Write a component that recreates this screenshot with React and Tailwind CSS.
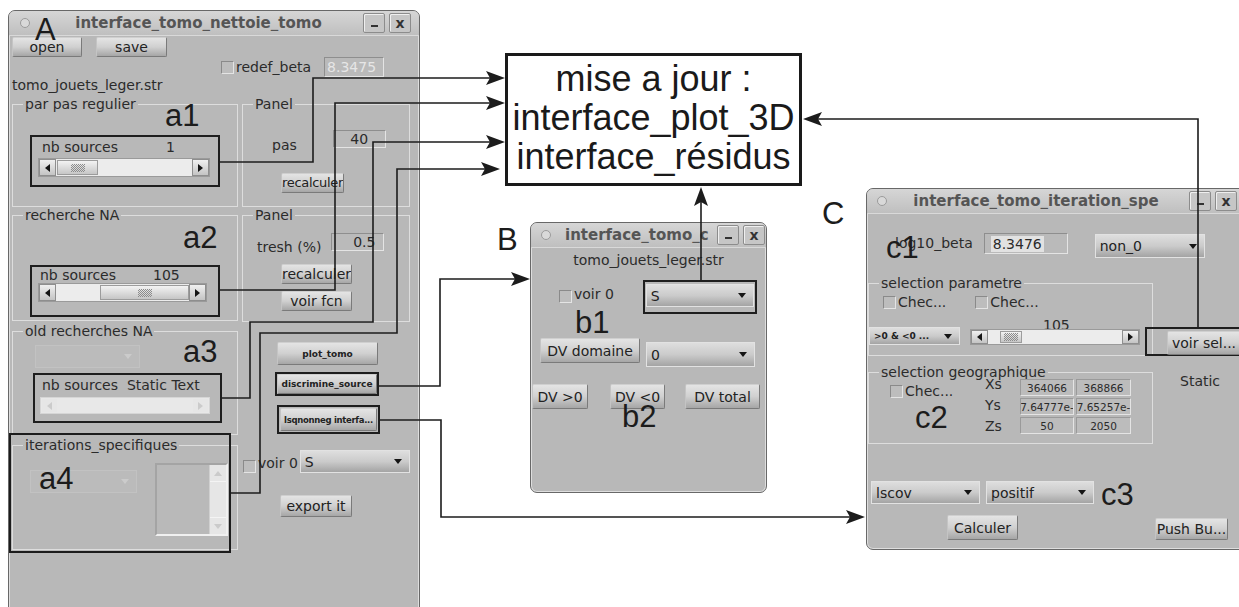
const ui = "font-['DejaVu_Sans',sans-serif]";
const ann = "font-['Liberation_Sans',Arial,sans-serif]";

function Tri({ dir = 'down', faint = false }) {
  const cls = {
    down: 'border-x-[4px] border-t-[5px] border-x-transparent border-t-[#151515]',
    left: 'border-y-[4px] border-r-[5px] border-y-transparent border-r-[#151515]',
    right: 'border-y-[4px] border-l-[5px] border-y-transparent border-l-[#151515]',
    up: 'border-x-[4px] border-b-[5px] border-x-transparent border-b-[#151515]',
  };
  const faintCls = {
    down: 'border-x-[4px] border-t-[5px] border-x-transparent border-t-[#cbcbcb]',
    left: 'border-y-[4px] border-r-[5px] border-y-transparent border-r-[#cbcbcb]',
    right: 'border-y-[4px] border-l-[5px] border-y-transparent border-l-[#cbcbcb]',
    up: 'border-x-[4px] border-b-[5px] border-x-transparent border-b-[#cbcbcb]',
  };
  return <span className={`h-0 w-0 ${faint ? faintCls[dir] : cls[dir]}`} />;
}

function WinBtn({ children }) {
  return (
    <div className="flex h-[20px] w-[22px] items-center justify-center rounded-[2px] border border-[#8c8c8c] bg-[#c6c6c6] text-[14px] font-bold leading-none text-[#333] shadow-[inset_1px_1px_0_#efefef]">
      {children}
    </div>
  );
}

function Win({ title, className = '', titleCls = '', barCls = '', children }) {
  return (
    <div
      className={`absolute flex flex-col overflow-hidden rounded-[7px] border border-[#686868] bg-[#b8b8b8] text-[14px] leading-[16px] text-[#2b2b2b] shadow-[inset_1px_0_0_#dedede,inset_-1px_0_0_#dedede,inset_0_-1px_0_#dedede] ${ui} ${className}`}
    >
      <div className={`flex h-[25px] shrink-0 items-center border-b border-[#d9d9d9] bg-linear-to-b from-[#d6d6d6] to-[#bfbfbf] ${barCls}`}>
        <span className="h-[10px] w-[10px] shrink-0 rounded-full border border-[#9b9b9b] bg-[#d9d9d9]" />
        <span className={`overflow-hidden whitespace-nowrap text-[15px] font-bold text-[#555] ${titleCls}`}>{title}</span>
        <div className="ml-[4px] flex shrink-0 gap-[4px]">
          <WinBtn>
            <span className="mt-[6px] h-[2px] w-[7px] bg-[#333]" />
          </WinBtn>
          <WinBtn>x</WinBtn>
        </div>
      </div>
      {children}
    </div>
  );
}

function Btn({ className = '', children }) {
  return (
    <div
      className={`flex shrink-0 items-center justify-center overflow-hidden whitespace-nowrap rounded-[2px] border border-[#7a7a7a] border-l-[#c4c4c4] border-t-[#cfcfcf] bg-linear-to-b from-[#e4e4e4] via-[#d0d0d0] to-[#a6a6a6] text-[#222] ${className}`}
    >
      {children}
    </div>
  );
}

function Drop({ className = '', children, faint = false }) {
  return (
    <div
      className={`flex shrink-0 items-center justify-between overflow-hidden whitespace-nowrap border pl-[4px] pr-[7px] ${
        faint
          ? 'border-[#c2c2c2] bg-[#bbbbbb] text-transparent'
          : 'border-[#e2e2e2] bg-linear-to-b from-[#dedede] via-[#cbcbcb] to-[#a4a4a4] text-[#222]'
      } ${className}`}
    >
      <span>{children}</span>
      <Tri dir="down" faint={faint} />
    </div>
  );
}

function Input({ className = '', children }) {
  return (
    <div
      className={`flex shrink-0 items-center justify-center border border-[#e4e4e4] border-l-[#8e8e8e] border-t-[#8e8e8e] bg-[#bababa] ${className}`}
    >
      {children}
    </div>
  );
}

function Check({ className = '' }) {
  return (
    <span
      className={`block h-[13px] w-[13px] shrink-0 border border-[#e4e4e4] border-l-[#8a8a8a] border-t-[#8a8a8a] bg-[#bdbdbd] ${className}`}
    />
  );
}

function ArrowBtn({ dir, faint }) {
  return (
    <div
      className={`flex w-[17px] shrink-0 items-center justify-center border ${
        faint ? 'border-[#e8e8e8] bg-[#e6e6e6]' : 'border-[#8e8e8e] bg-linear-to-b from-[#f0f0f0] to-[#c4c4c4]'
      }`}
    >
      <Tri dir={dir} faint={faint} />
    </div>
  );
}

function Scroll({ className = '', gapCls = '', thumbCls = '', faint = false }) {
  return (
    <div className={`flex shrink-0 border ${faint ? 'border-[#d6d6d6] bg-[#e8e8e8]' : 'border-[#9a9a9a] bg-[#ececec]'} ${className}`}>
      <ArrowBtn dir="left" faint={faint} />
      <div className="flex flex-1 items-stretch py-[1px]">
        {!faint && (
          <>
            <div className={gapCls} />
            <div
              className={`flex items-center justify-center border border-[#9c9c9c] bg-linear-to-b from-[#f3f3f3] to-[#c6c6c6] ${thumbCls}`}
            >
              <span className="h-[8px] w-[14px] bg-[image:repeating-conic-gradient(#8c8c8c_0_25%,transparent_0_50%)] bg-[length:2px_2px]" />
            </div>
          </>
        )}
      </div>
      <ArrowBtn dir="right" faint={faint} />
    </div>
  );
}

function Group({ label, className = '', children }) {
  return (
    <fieldset className={`min-w-0 shrink-0 border border-[#dddddd] ${className}`}>
      <legend className="ml-[10px] px-[2px] text-[14px] leading-[16px] text-[#2b2b2b]">{label}</legend>
      {children}
    </fieldset>
  );
}

function Mark({ className = '', children }) {
  return (
    <span className={`absolute text-[31px] leading-[31px] text-[#1c1c1c] ${ann} ${className}`}>{children}</span>
  );
}

function Frame({ className = '', children }) {
  return <div className={`shrink-0 border-2 border-[#1e1e1e] ${className}`}>{children}</div>;
}

function WindowA() {
  return (
    <Win
      title="interface_tomo_nettoie_tomo"
      className="left-[8px] top-[10px] h-[610px] w-[412px]"
      barCls="pl-[11px] pr-[8px]"
      titleCls="flex-1 pl-[8px] text-center"
    >
      <div className="flex flex-col pl-[3px]">
        <div className="mt-[1px] flex gap-[14px]">
          <Btn className="h-[20px] w-[70px] text-[14px]">open</Btn>
          <Btn className="h-[20px] w-[71px] text-[14px]">save</Btn>
        </div>
        <div className="flex h-[20px] items-center">
          <Check className="ml-[209px]" />
          <span className="ml-[2px]">redef_beta</span>
          <Input className="ml-[13px] h-[20px] w-[60px] justify-start pl-[2px] text-[#e6e6e6]">8.3475</Input>
        </div>
        <div className="h-[16px]">tomo_jouets_leger.str</div>

        <div className="mt-[3px] grid grid-cols-[226px_168px] gap-x-[4px]">
          {/* left column */}
          <div className="flex flex-col">
            <Group label="par pas regulier" className="h-[111px]">
              <Frame className="ml-[17px] mt-[23px] h-[52px] w-[190px]">
                <div className="flex pl-[10px] pt-[2px]">
                  <span className="w-[124px]">nb sources</span>
                  <span>1</span>
                </div>
                <Scroll className="ml-[6px] mt-[3px] h-[19px] w-[172px]" gapCls="w-[1px]" thumbCls="w-[41px]" />
              </Frame>
            </Group>
            <Group label="recherche NA" className="h-[114px]">
              <Frame className="ml-[17px] mt-[42px] h-[52px] w-[190px]">
                <div className="flex pl-[8px]">
                  <span className="w-[113px]">nb sources</span>
                  <span>105</span>
                </div>
                <Scroll className="ml-[6px] h-[19px] w-[169px]" gapCls="w-[44px]" thumbCls="w-[89px]" />
              </Frame>
            </Group>
            <Group label="old recherches NA" className="mt-[2px] h-[112px]">
              <Drop faint className="ml-[22px] mt-[6px] h-[23px] w-[105px]">x</Drop>
              <Frame className="ml-[20px] mt-[5px] h-[50px] w-[189px]">
                <div className="whitespace-pre pl-[7px] pt-[2px]">nb sources  Static Text</div>
                <Scroll faint className="ml-[5px] mt-[4px] h-[17px] w-[170px]" />
              </Frame>
            </Group>
            <Group label="iterations_specifiques" className="mt-[2px] h-[113px]">
              <div className="flex items-start">
                <Drop faint className="ml-[17px] mt-[17px] h-[23px] w-[107px]">x</Drop>
                <div className="ml-[18px] mt-[10px] flex h-[73px] w-[73px] border-2 border-[#f0f0f0] border-l-[#a4a4a4] border-t-[#a4a4a4] bg-[#b9b9b9]">
                  <div className="flex-1" />
                  <div className="flex w-[17px] flex-col border-l border-[#d0d0d0] bg-[#e6e6e6]">
                    <div className="flex h-[17px] items-center justify-center border-b border-[#f4f4f4]">
                      <Tri dir="up" faint />
                    </div>
                    <div className="flex-1" />
                    <div className="flex h-[17px] items-center justify-center border-t border-[#f4f4f4]">
                      <Tri dir="down" faint />
                    </div>
                  </div>
                </div>
              </div>
            </Group>
          </div>

          {/* right column */}
          <div className="flex flex-col">
            <Group label="Panel" className="h-[111px]">
              <div className="mt-[18px] flex items-start">
                <span className="ml-[29px] mt-[7px]">pas</span>
                <Input className="ml-[36px] h-[18px] w-[53px]">40</Input>
              </div>
              <Btn className="ml-[38px] mt-[20px] h-[20px] w-[63px] text-[13px] tracking-[-0.3px]">recalculer</Btn>
            </Group>
            <Group label="Panel" className="h-[115px]">
              <div className="mt-[10px] flex items-start">
                <span className="ml-[14px] mt-[6px]">tresh (%)</span>
                <Input className="ml-[10px] h-[18px] w-[53px] justify-end pr-[8px]">0.5</Input>
              </div>
              <Btn className="ml-[38px] mt-[9px] h-[20px] w-[71px] text-[14px]">recalculer</Btn>
              <Btn className="ml-[38px] mt-[7px] h-[20px] w-[71px] text-[14px]">voir fcn</Btn>
            </Group>
            <Btn className="ml-[35px] mt-[20px] h-[23px] w-[101px] text-[9px] font-bold">plot_tomo</Btn>
            <Frame className="ml-[33px] mt-[7px] h-[24px] w-[104px]">
              <Btn className="h-full w-full text-[9px] font-bold">discrimine_source</Btn>
            </Frame>
            <Frame className="ml-[35px] mt-[9px] h-[29px] w-[103px] p-[1px]">
              <Btn className="h-full w-full text-[8.5px] font-bold tracking-[-0.3px]">lsqnonneg interfa...</Btn>
            </Frame>
            <div className="mt-[16px] flex items-start">
              <Check className="ml-[1px] mt-[10px]" />
              <span className="ml-[2px] mt-[5px]">voir 0</span>
              <Drop className="ml-[2px] h-[23px] w-[110px]">S</Drop>
            </div>
            <Btn className="ml-[38px] mt-[22px] h-[22px] w-[72px] text-[14px]">export it</Btn>
          </div>
        </div>
      </div>
    </Win>
  );
}

function WindowB() {
  return (
    <Win
      title="interface_tomo_c"
      className="left-[530px] top-[222px] h-[271px] w-[237px]"
      barCls="pl-[10px] pr-[1px]"
      titleCls="ml-[14px] flex-1"
    >
      <div className="mt-[4px] text-center">tomo_jouets_leger.str</div>
      <div className="mt-[12px] flex items-start">
        <Check className="ml-[28px] mt-[10px]" />
        <span className="ml-[2px] mt-[6px]">voir 0</span>
        <Frame className="ml-[29px] h-[34px] w-[114px] pl-[1px] pt-[2px]">
          <Drop className="h-[23px] w-[108px]">S</Drop>
        </Frame>
      </div>
      <div className="mt-[24px] flex items-start">
        <Btn className="ml-[9px] h-[25px] w-[100px] text-[14px]">DV domaine</Btn>
        <Drop className="ml-[6px] mt-[4px] h-[25px] w-[109px]">0</Drop>
      </div>
      <div className="mt-[17px] flex">
        <Btn className="ml-[1px] h-[25px] w-[56px] text-[14px]">DV &gt;0</Btn>
        <Btn className="ml-[22px] h-[25px] w-[55px] text-[14px]">DV &lt;0</Btn>
        <Btn className="ml-[20px] h-[25px] w-[75px] text-[14px]">DV total</Btn>
      </div>
    </Win>
  );
}

function WindowC() {
  const vals = ['364066', '368866', '7.64777e-', '7.65257e-', '50', '2050'];
  return (
    <Win
      title="interface_tomo_iteration_spe"
      className="left-[866px] top-[188px] h-[362px] w-[380px]"
      barCls="pl-[10px] pr-[8px]"
      titleCls="flex-1 text-center"
    >
      <div className="mt-[19px] flex items-start">
        <span className="ml-[28px] mt-[2px]">log10_beta</span>
        <Input className="ml-[11px] h-[21px] w-[84px] justify-start pl-[6px]">
          <span className="bg-[#e2e2e2] px-[2px]">8.3476</span>
        </Input>
        <Drop className="ml-[27px] mt-[1px] h-[24px] w-[110px]">non_0</Drop>
      </div>

      <div className="mt-[17px] flex items-start">
        <Group label="selection parametre" className="ml-[1px] h-[81px] w-[285px]">
          <div className="mt-[3px] flex h-[16px] items-center">
            <Check className="ml-[14px]" />
            <span className="ml-[2px]">Chec...</span>
            <Check className="ml-[29px]" />
            <span className="ml-[2px]">Chec...</span>
          </div>
          <div className="ml-[174px] mt-[9px] leading-[12px]">105</div>
          <div className="-mt-[4px] flex items-start">
            <Drop className="h-[18px] w-[91px] text-[9px] font-bold">&gt;0 &amp; &lt;0 ...</Drop>
            <Scroll className="ml-[10px] mt-[2px] h-[16px] w-[170px]" gapCls="w-[12px]" thumbCls="w-[22px]" />
          </div>
        </Group>
        <Frame className="-ml-[8px] mt-[52px] h-[29px] w-[100px]">
          <Btn className="ml-[20px] mt-[2px] h-[24px] w-[74px] text-[14px]">voir sel...</Btn>
        </Frame>
      </div>

      <div className="mt-[8px] flex items-start">
        <Group label="selection geographique" className="ml-[1px] h-[80px] w-[285px]">
          <div className="flex items-start">
            <div className="mt-[3px] flex w-[116px] items-center pl-[21px]">
              <Check />
              <span className="ml-[2px]">Chec...</span>
            </div>
            <div className="-mt-[6px] flex w-[35px] flex-col leading-[21px]">
              <span>Xs</span>
              <span>Ys</span>
              <span>Zs</span>
            </div>
            <div className="-mt-[1px] grid auto-rows-[17px] grid-cols-[54px_55px] gap-[2px] text-[10.5px]">
              {vals.map((v) => (
                <div
                  key={v}
                  className="flex items-center justify-center overflow-hidden whitespace-nowrap border border-[#e4e4e4] border-l-[#9a9a9a] border-t-[#9a9a9a] bg-[#bcbcbc]"
                >
                  {v}
                </div>
              ))}
            </div>
          </div>
        </Group>
        <span className="ml-[27px] mt-[9px]">Static</span>
      </div>

      <div className="mt-[37px] flex">
        <Drop className="ml-[4px] h-[23px] w-[109px]">lscov</Drop>
        <Drop className="ml-[6px] h-[23px] w-[108px]">positif</Drop>
      </div>
      <div className="mt-[11px] flex items-start">
        <Btn className="ml-[80px] h-[25px] w-[71px] text-[14px]">Calculer</Btn>
        <Btn className="ml-[137px] mt-[3px] h-[22px] w-[73px] text-[14px]">Push Bu...</Btn>
      </div>
    </Win>
  );
}

function Arrows() {
  return (
    <svg className="pointer-events-none absolute inset-0 h-full w-full" viewBox="0 0 1239 607">
      <g fill="none" stroke="#1c1c1c" strokeWidth="1.6">
        <polyline points="220,162 313,162 313,78 490,78" />
        <polyline points="220,290 335,290 335,103 490,103" />
        <polyline points="222,398 250,398 250,322 373,322 373,142 490,142" />
        <polyline points="230,493 260,493 260,333 397,333 397,169 485,169" />
        <polyline points="379,386 440,386 440,279 515,279" />
        <polyline points="380,420 441,420 441,517 850,517" />
        <polyline points="701,280 701,202" />
        <polyline points="1198,327 1198,119 818,119" />
        <rect x="10" y="434" width="220" height="118" strokeWidth="2" />
      </g>
      <g fill="#1c1c1c">
        <polygon points="505,78 486,71 490,78 486,85" />
        <polygon points="505,103 486,96 490,103 486,110" />
        <polygon points="505,142 486,135 490,142 486,149" />
        <polygon points="500,169 481,162 485,169 481,176" />
        <polygon points="530,279 511,272 515,279 511,286" />
        <polygon points="865,517 846,510 850,517 846,524" />
        <polygon points="701,187 694,206 701,202 708,206" />
        <polygon points="803,119 822,112 818,119 822,126" />
      </g>
    </svg>
  );
}

export default function App() {
  return (
    <div className="relative h-[607px] w-[1239px] overflow-hidden bg-white">
      <WindowA />
      <WindowB />
      <WindowC />

      <div
        className={`absolute left-[505px] top-[53px] h-[133px] w-[297px] border-[3px] border-[#1a1a1a] bg-white pt-[3px] text-center text-[36px] leading-[39px] text-[#1a1a1a] ${ann}`}
      >
        <div>mise a jour :</div>
        <div>interface_plot_3D</div>
        <div>interface_résidus</div>
      </div>

      <Mark className="left-[35px] top-[14px]">A</Mark>
      <Mark className="left-[165px] top-[100px]">a1</Mark>
      <Mark className="left-[183px] top-[222px]">a2</Mark>
      <Mark className="left-[183px] top-[336px]">a3</Mark>
      <Mark className="left-[39px] top-[463px]">a4</Mark>
      <Mark className="left-[497px] top-[224px]">B</Mark>
      <Mark className="left-[575px] top-[307px]">b1</Mark>
      <Mark className="left-[622px] top-[401px]">b2</Mark>
      <Mark className="left-[822px] top-[198px]">C</Mark>
      <Mark className="left-[886px] top-[232px]">c1</Mark>
      <Mark className="left-[915px] top-[402px]">c2</Mark>
      <Mark className="left-[1101px] top-[479px]">c3</Mark>

      <Arrows />
    </div>
  );
}
